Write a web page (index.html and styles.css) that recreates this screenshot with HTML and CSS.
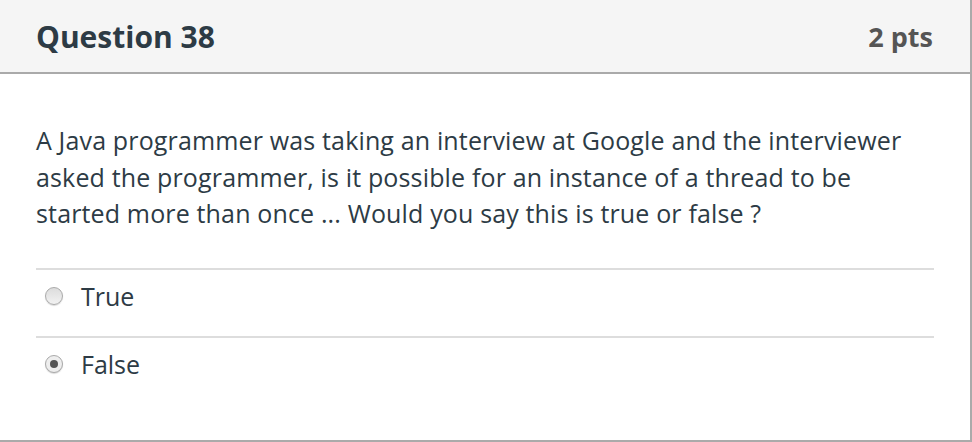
FILE: index.html
```html
<!DOCTYPE html>
<html>
<head>
<meta charset="utf-8">
<link rel="stylesheet" href="styles.css">
</head>
<body>
<div class="question">
  <div class="header">
    <span class="title">Question 38</span>
    <span class="pts">2 pts</span>
  </div>
  <div class="content">
    <p class="text">A Java programmer was taking an interview at Google and the interviewer asked the programmer, is it possible for an instance of a thread to be started more than once ... Would you say this is true or false ?</p>
    <div class="answers">
      <label class="answer"><input type="radio" name="a" class="radio"><span>True</span></label>
      <label class="answer"><input type="radio" name="a" class="radio" checked><span>False</span></label>
    </div>
  </div>
</div>
</body>
</html>
```

FILE: styles.css
```css
html, body {
  margin: 0;
  padding: 0;
  background: #fff;
}
body {
  font-family: "Open Sans", "Liberation Sans", sans-serif;
  color: #2d3b45;
}
.question {
  width: 970px;
  height: 440px;
  border-right: 2px solid #aaa;
  border-bottom: 2px solid #aaa;
  display: flex;
  flex-direction: column;
}
.header {
  height: 72px;
  flex: none;
  background: #f5f5f5;
  border-bottom: 2px solid #aaa;
  display: flex;
  align-items: center;
  justify-content: space-between;
  padding: 0 37px 0 36px;
}
.title {
  font-weight: 700;
  font-size: 30px;
  color: #2d3b45;
}
.pts {
  font-weight: 700;
  font-size: 27px;
  color: #555;
}
.content {
  padding: 48px 36px 0 36px;
}
.text {
  margin: 0;
  font-size: 25px;
  line-height: 36.5px;
  letter-spacing: 0.15px;
  width: 880px;
}
.answers {
  margin-top: 36px;
  width: 898px;
}
.answer {
  display: flex;
  align-items: center;
  height: 52px;
  padding: 0 0 14px 9px;
  border-top: 2px solid #ddd;
  font-size: 25px;
  gap: 18px;
}
.radio {
  appearance: none;
  -webkit-appearance: none;
  margin: 0;
  width: 18px;
  height: 18px;
  border-radius: 50%;
  border: 1.5px solid #aaa;
  background: linear-gradient(#dcdcdc, #f2f2f2);
  box-shadow: 0 1px 1px rgba(0,0,0,0.15);
  display: flex;
  align-items: center;
  justify-content: center;
  flex: none;
}
.radio:checked {
  background: #eee;
}
.radio:checked::after {
  content: "";
  width: 8px;
  height: 8px;
  border-radius: 50%;
  background: #555;
}
```
